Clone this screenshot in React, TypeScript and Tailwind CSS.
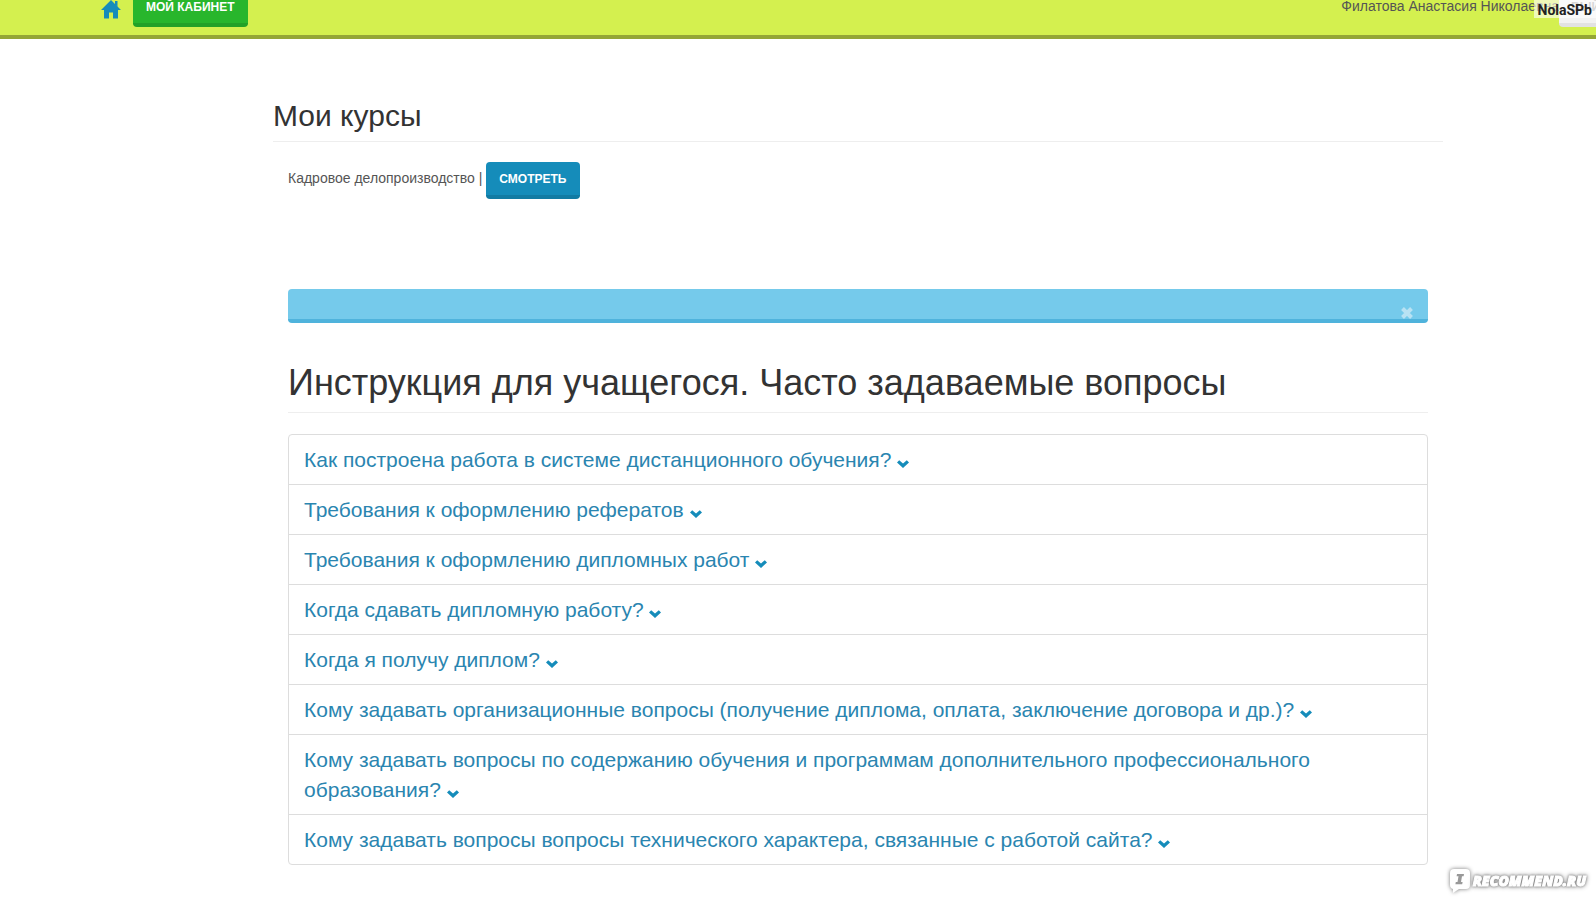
import React, { useState } from 'react';

const questions = [
  'Как построена работа в системе дистанционного обучения?',
  'Требования к оформлению рефератов',
  'Требования к оформлению дипломных работ',
  'Когда сдавать дипломную работу?',
  'Когда я получу диплом?',
  'Кому задавать организационные вопросы (получение диплома, оплата, заключение договора и др.)?',
  'Кому задавать вопросы по содержанию обучения и программам дополнительного профессионального образования?',
  'Кому задавать вопросы вопросы технического характера, связанные с работой сайта?',
];

function HomeIcon() {
  return (
    <svg viewBox="0 0 20 19" className="w-5 h-[19px]" fill="#158cba" aria-hidden="true">
      <path d="M10 0 20 10H17V18.5H12V12.5H8V18.5H3V10H0L10 0Z" />
      <path d="M14 1H16.5V7L14 4.5Z" />
    </svg>
  );
}

function ChevronIcon() {
  return (
    <svg viewBox="0 0 12 8" className="inline-block w-3 h-2 align-[-1px]" fill="#158cba" aria-hidden="true">
      <path d="M0 2.4 2.2 0.2 6 3.4 9.8 0.2 12 2.4 6 8Z" />
    </svg>
  );
}

function Watermark() {
  return (
    <div className="fixed right-[10px] bottom-2 flex items-center gap-[2px]">
      <svg viewBox="0 0 22 26" className="w-[22px] h-[26px] overflow-visible drop-shadow-[0_0_2px_#777]" aria-hidden="true">
        <path d="M5 1H17Q21 1 21 5V17Q21 21 17 21H10L4 25V21Q1 20 1 17V5Q1 1 5 1Z" fill="#fff" />
        <path d="M8 6H15L14.6 8.2H13L12 14H13.6L13.2 16.2H6.4L6.8 14H8.5L9.5 8.2H7.6Z" fill="#999" />
      </svg>
      <span className="font-['Open_Sans',sans-serif] text-sm leading-5 font-extrabold italic text-white [-webkit-text-stroke:1px_white] [filter:drop-shadow(0_0_1px_#888)_drop-shadow(0_0_2px_#999)]">
        RECOMMEND.RU
      </span>
    </div>
  );
}

export default function App() {
  const [alertOpen, setAlertOpen] = useState(true);

  return (
    <div className="min-h-screen overflow-hidden bg-white font-['Liberation_Sans',Arial,sans-serif] text-sm leading-5 text-[#555]">
      <header className="-mt-[17px] h-14 flex items-center justify-between bg-[#d4f04f] border-b-4 border-[#94a636] pl-[101px]">
        <div className="flex items-center gap-3">
          <a href="#" aria-label="Главная">
            <HomeIcon />
          </a>
          <button className="h-9 px-[13px] rounded bg-[#28b62c] border-b-4 border-[#23a127] text-white text-xs font-bold">
            МОЙ КАБИНЕТ
          </button>
        </div>
        <div className="flex items-baseline -mr-8">
          <span>Филатова Анастасия Николаевна</span>
          <button className="h-9 px-3 rounded bg-[#f2f2f2] border-b-4 border-[#e2e2e2] text-[#999] text-xs font-bold">
            ВЫЙТИ
          </button>
        </div>
      </header>
      <div className="absolute top-0 right-0 h-[18px] px-1 bg-white/60 font-[Roboto,sans-serif] text-sm font-bold text-[#222]">
        NolaSPb
      </div>

      <main className="ml-[273px] mr-[153px] pt-[60px]">
        <h2 className="pb-[9px] border-b border-[#eee] text-[30px] leading-[33px] text-[#333]">Мои курсы</h2>

        <div className="px-[15px]">
          <div className="mt-5 flex items-baseline gap-1">
            <span>Кадровое делопроизводство |</span>
            <button className="h-[37px] px-[13px] rounded bg-[#158cba] border-b-4 border-[#127ba3] text-white text-xs font-bold">
              СМОТРЕТЬ
            </button>
          </div>

          {alertOpen && (
            <div className="mt-[90px] h-[34px] flex justify-end items-end pr-[15px] rounded bg-[#75caeb] border-b-4 border-[#4fb3dc]">
              <button aria-label="Закрыть" onClick={() => setAlertOpen(false)}>
                <svg viewBox="0 0 12 12" className="w-3 h-3" fill="none" stroke="#b8e2f3" strokeWidth="4" aria-hidden="true">
                  <path d="M1.5 1.5 10.5 10.5M10.5 1.5 1.5 10.5" />
                </svg>
              </button>
            </div>
          )}

          <h1 className="mt-10 pb-[9px] border-b border-[#eee] text-4xl leading-10 text-[#333]">
            Инструкция для учащегося. Часто задаваемые вопросы
          </h1>

          <ul className="mt-[21px] rounded border border-[#ddd] divide-y divide-[#ddd]">
            {questions.map((q) => (
              <li key={q} className="px-[15px] pt-[10px] pb-[9px] text-[21px] leading-[30px]">
                <a href="#" className="text-[#2a85b0]">
                  {q} <ChevronIcon />
                </a>
              </li>
            ))}
          </ul>
        </div>
      </main>

      <Watermark />
    </div>
  );
}
